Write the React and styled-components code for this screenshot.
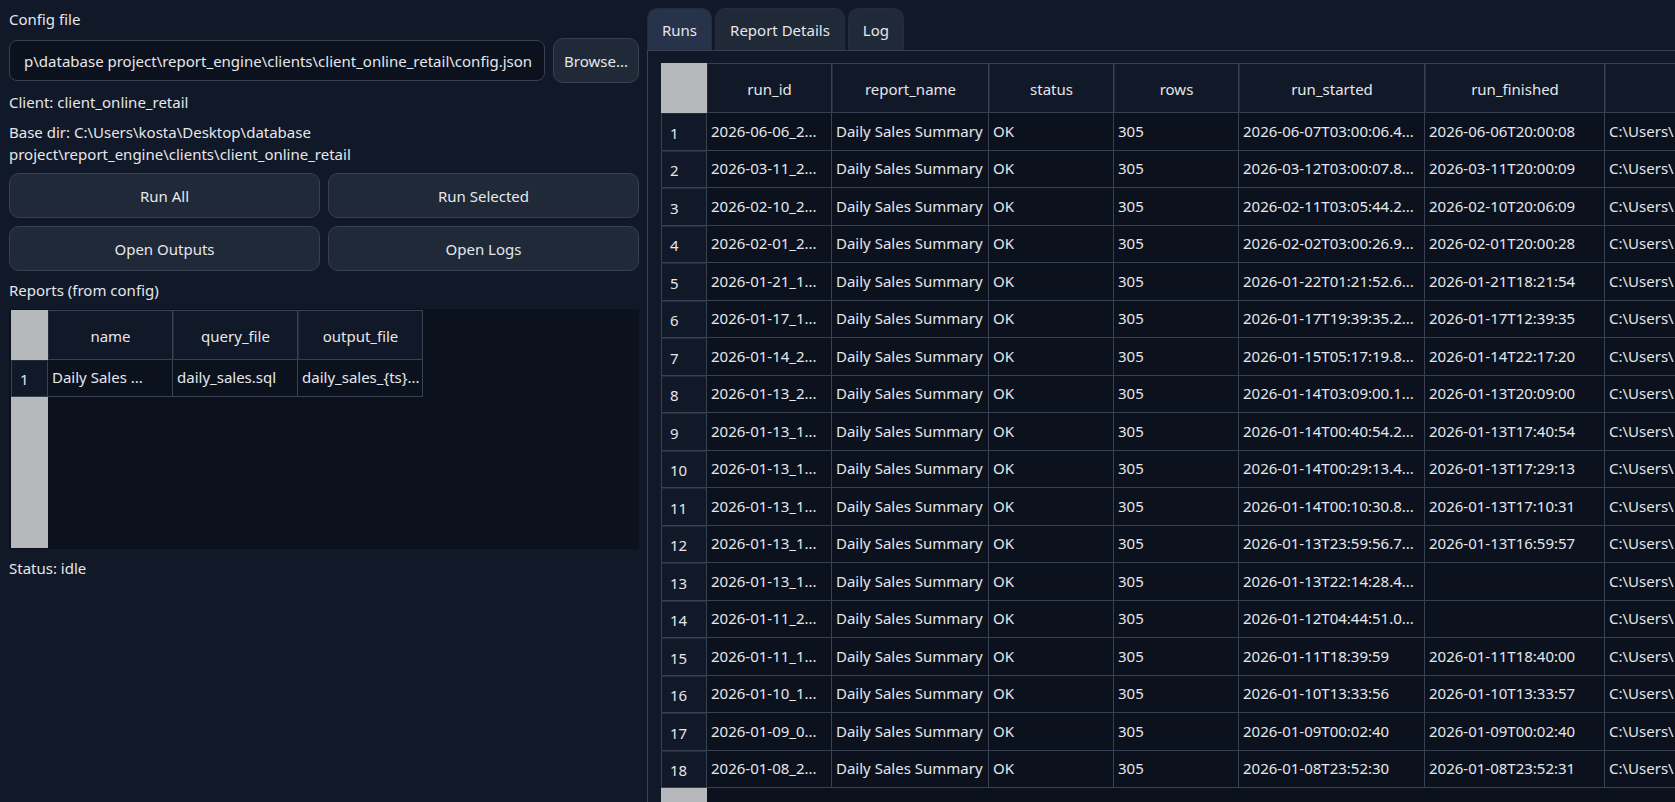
import React, { useState } from 'react';
import styled, { createGlobalStyle, css } from 'styled-components';

const colors = {
  window: '#111827',
  base: '#0b121e',
  button: '#1f2937',
  tabActive: '#26334a',
  border: '#374151',
  borderSoft: '#232d3b',
  corner: '#b7b8bc',
  text: '#e5e7eb',
};

const GlobalStyle = createGlobalStyle`
  *, *::before, *::after {
    box-sizing: border-box;
  }

  body {
    margin: 0;
    background: ${colors.window};
    color: ${colors.text};
    font-family: 'Noto Sans', 'Open Sans', sans-serif;
    font-size: 15px;
    line-height: 22px;
  }

  button, input {
    font: inherit;
    color: inherit;
  }
`;

const Window = styled.div`
  display: grid;
  grid-template-columns: minmax(0, 630fr) minmax(0, 1028fr);
  gap: 8px;
  height: 100vh;
  padding: 8px 0 0 9px;
  overflow: hidden;
`;

const Panel = styled.section`
  display: flex;
  flex-direction: column;
  gap: 8px;
`;

const PathRow = styled.div`
  display: flex;
  align-items: center;
  gap: 8px;
`;

const PathInput = styled.input`
  flex: 1;
  min-width: 0;
  height: 41px;
  padding: 0 12px 0 8px;
  border: 1px solid ${colors.border};
  border-radius: 8px;
  background: ${colors.base};
  text-align: right;
  outline: none;
`;

const Button = styled.button`
  height: 45px;
  padding: 0 10px;
  border: 1px solid ${colors.border};
  border-radius: 10px;
  background: ${colors.button};
  cursor: pointer;

  &:hover {
    background: ${colors.tabActive};
  }
`;

const Actions = styled.div`
  display: grid;
  grid-template-columns: 1fr 1fr;
  gap: 8px;
`;

const Text = styled.p`
  max-width: 400px;
  margin: 0;
`;

const Tabs = styled.section`
  display: flex;
  flex-direction: column;
  min-height: 0;
`;

const TabBar = styled.div`
  display: flex;
  gap: 3px;
`;

const Tab = styled.button`
  height: 42px;
  padding: 0 14px;
  border: 1px solid ${colors.borderSoft};
  border-bottom: none;
  border-radius: 10px 10px 0 0;
  background: ${colors.button};
  cursor: pointer;

  ${({ $active }) => $active && css`
    background: ${colors.tabActive};
  `}
`;

const TabPane = styled.div`
  flex: 1;
  min-height: 0;
  padding: 12px 0 0 13px;
  border-top: 1px solid ${colors.border};
  border-left: 1px solid ${colors.border};
`;

const TableFrame = styled.div`
  height: ${({ $height }) => $height || '100%'};
  padding: ${({ $framed }) => ($framed ? '1px 2px' : '0')};
  overflow: hidden;
  background: ${colors.base};
`;

const Row = styled.tr`
  height: 37px;
`;

// a fixed table grows from 1px to the sum of its columns
const Table = styled.table`
  width: 1px;
  height: 100%;
  table-layout: fixed;
  border-collapse: separate;
  border-spacing: 0;

  td {
    padding: 0 4px 2px;
    border-right: 1px solid ${colors.border};
    border-bottom: 1px solid ${colors.border};
    white-space: nowrap;
    overflow: hidden;
  }

  tbody th {
    padding: 1px 8px 0;
    border: 1px solid ${colors.border};
    border-top-color: ${colors.borderSoft};
    background: ${colors.window};
    font-weight: 400;
    text-align: left;
  }

  ${({ $fill }) => $fill && css`
    width: 100%;

    ${Row}:nth-child(odd) {
      height: 38px;
    }

    td:last-child,
    thead th:last-child {
      border-right: none;
    }
  `}
`;

const HeadCell = styled.th`
  height: 50px;
  padding: 1px 0 0;
  border: 1px solid ${colors.border};
  border-left-color: ${colors.borderSoft};
  background: ${colors.window};
  font-weight: 400;
`;

const Corner = styled.td`
  && {
    border: none;
    background: ${colors.corner};
  }
`;

const Rest = styled.td`
  && {
    border: none;
  }
`;

const CONFIG_PATH = 'p\\database project\\report_engine\\clients\\client_online_retail\\config.json';

const reportColumns = [
  { label: 'name', width: 125 },
  { label: 'query_file', width: 125 },
  { label: 'output_file', width: 125 },
];

const reports = [['Daily Sales ...', 'daily_sales.sql', 'daily_sales_{ts}...']];

const runColumns = [
  { label: 'run_id', width: 125 },
  { label: 'report_name', width: 157 },
  { label: 'status', width: 125 },
  { label: 'rows', width: 125 },
  { label: 'run_started', width: 186 },
  { label: 'run_finished', width: 180 },
  { label: '' },
];

const runs = [
  ['2026-06-06_2...', '2026-06-07T03:00:06.4...', '2026-06-06T20:00:08'],
  ['2026-03-11_2...', '2026-03-12T03:00:07.8...', '2026-03-11T20:00:09'],
  ['2026-02-10_2...', '2026-02-11T03:05:44.2...', '2026-02-10T20:06:09'],
  ['2026-02-01_2...', '2026-02-02T03:00:26.9...', '2026-02-01T20:00:28'],
  ['2026-01-21_1...', '2026-01-22T01:21:52.6...', '2026-01-21T18:21:54'],
  ['2026-01-17_1...', '2026-01-17T19:39:35.2...', '2026-01-17T12:39:35'],
  ['2026-01-14_2...', '2026-01-15T05:17:19.8...', '2026-01-14T22:17:20'],
  ['2026-01-13_2...', '2026-01-14T03:09:00.1...', '2026-01-13T20:09:00'],
  ['2026-01-13_1...', '2026-01-14T00:40:54.2...', '2026-01-13T17:40:54'],
  ['2026-01-13_1...', '2026-01-14T00:29:13.4...', '2026-01-13T17:29:13'],
  ['2026-01-13_1...', '2026-01-14T00:10:30.8...', '2026-01-13T17:10:31'],
  ['2026-01-13_1...', '2026-01-13T23:59:56.7...', '2026-01-13T16:59:57'],
  ['2026-01-13_1...', '2026-01-13T22:14:28.4...', ''],
  ['2026-01-11_2...', '2026-01-12T04:44:51.0...', ''],
  ['2026-01-11_1...', '2026-01-11T18:39:59', '2026-01-11T18:40:00'],
  ['2026-01-10_1...', '2026-01-10T13:33:56', '2026-01-10T13:33:57'],
  ['2026-01-09_0...', '2026-01-09T00:02:40', '2026-01-09T00:02:40'],
  ['2026-01-08_2...', '2026-01-08T23:52:30', '2026-01-08T23:52:31'],
].map(([id, started, finished]) => [
  id, 'Daily Sales Summary', 'OK', '305', started, finished, 'C:\\Users\\',
]);

const DataTable = ({ columns, rows, gutter, fill }) => (
  <Table $fill={fill}>
    <colgroup>
      <col style={{ width: gutter }} />
      {columns.map((column, i) => (
        <col key={i} style={{ width: column.width }} />
      ))}
    </colgroup>
    <thead>
      <tr>
        <Corner />
        {columns.map((column, i) => (
          <HeadCell key={i} scope="col">{column.label}</HeadCell>
        ))}
      </tr>
    </thead>
    <tbody>
      {rows.map((row, i) => (
        <Row key={i}>
          <th scope="row">{i + 1}</th>
          {row.map((value, j) => <td key={j}>{value}</td>)}
        </Row>
      ))}
      {/* empty area under the last row */}
      <tr>
        <Corner />
        <Rest colSpan={columns.length} />
      </tr>
    </tbody>
  </Table>
);

const tabs = ['Runs', 'Report Details', 'Log'];

const App = () => {
  const [path, setPath] = useState(CONFIG_PATH);
  const [activeTab, setActiveTab] = useState('Runs');

  return (
    <>
      <GlobalStyle />
      <Window>
        <Panel>
          <label htmlFor="config-file">Config file</label>
          <PathRow>
            <PathInput
              id="config-file"
              type="text"
              value={path}
              onChange={(e) => setPath(e.target.value)}
            />
            <Button type="button">Browse...</Button>
          </PathRow>
          <Text>Client: client_online_retail</Text>
          <Text>Base dir: C:\Users\kosta\Desktop\database project\report_engine\clients\client_online_retail</Text>
          <Actions>
            <Button type="button">Run All</Button>
            <Button type="button">Run Selected</Button>
            <Button type="button">Open Outputs</Button>
            <Button type="button">Open Logs</Button>
          </Actions>
          <Text>Reports (from config)</Text>
          <TableFrame $height="240px" $framed>
            <DataTable columns={reportColumns} rows={reports} gutter={37} />
          </TableFrame>
          <Text>Status: idle</Text>
        </Panel>

        <Tabs>
          <TabBar role="tablist">
            {tabs.map((tab) => (
              <Tab
                key={tab}
                type="button"
                role="tab"
                aria-selected={tab === activeTab}
                $active={tab === activeTab}
                onClick={() => setActiveTab(tab)}
              >
                {tab}
              </Tab>
            ))}
          </TabBar>
          <TabPane role="tabpanel">
            {activeTab === 'Runs' && (
              <TableFrame>
                <DataTable columns={runColumns} rows={runs} gutter={46} fill />
              </TableFrame>
            )}
          </TabPane>
        </Tabs>
      </Window>
    </>
  );
};

export default App;
